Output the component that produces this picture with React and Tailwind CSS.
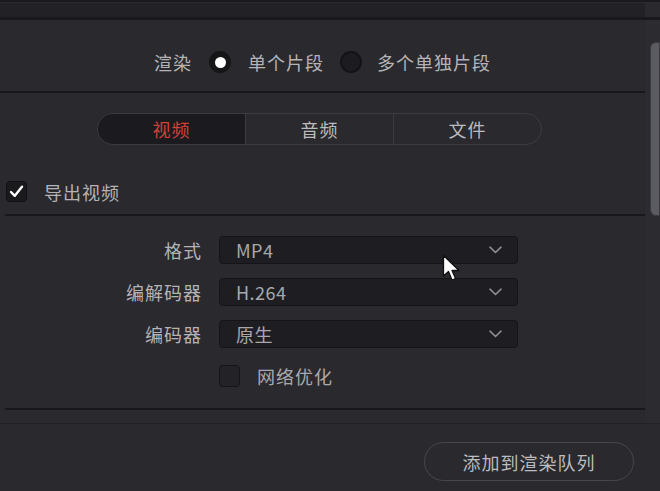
const font = { fontFamily: '"Noto Sans CJK SC", "Noto Sans", sans-serif' };

function Chevron() {
  return (
    <svg width="13" height="8" viewBox="0 0 13 8" className="shrink-0">
      <path d="M1 1.2 L6.5 6.5 L12 1.2" fill="none" stroke="#8e8e92" strokeWidth="1.6" strokeLinecap="round" strokeLinejoin="round" />
    </svg>
  );
}

function Select({ label, value }) {
  return (
    <div className="flex items-center h-[28px]">
      <div className="w-[202px] text-right text-[18px] tracking-[1px] leading-none text-[#b4b4b6]">{label}</div>
      <div className="ml-[17px] w-[299px] h-[28px] rounded-[4px] bg-[#1e1e22] border border-[#151518] flex items-center justify-between pl-[16px] pr-[15px]">
        <span className="text-[18px] tracking-[0.5px] leading-none text-[#a8a8ac]">{value}</span>
        <Chevron />
      </div>
    </div>
  );
}

export default function App() {
  const tabs = ['视频', '音频', '文件'];

  return (
    <div className="relative w-[660px] h-[491px] bg-[#29292e] overflow-hidden flex flex-col select-none" style={font}>
      {/* top strip */}
      <div className="h-[2px] bg-[#1a1a1d]" />
      <div className="h-[1px] bg-[#2a2a2f]" />
      <div className="h-[14px] bg-[#222226] w-[645px]" />
      <div className="h-[3px] bg-[#19191c]" />

      <div className="flex flex-1">
        <div className="w-[645px] flex flex-col">
          {/* render mode */}
          <div className="h-[71px] flex justify-center items-start pt-[31px]">
            <div className="flex items-center h-[22px] text-[18px] tracking-[1px] leading-none text-[#b4b4b6]">
              <span>渲染</span>
              <span className="ml-[17px] w-[22px] h-[22px] rounded-full bg-[#151517] flex items-center justify-center">
                <span className="w-[11px] h-[11px] rounded-full bg-white" />
              </span>
              <span className="ml-[17px]">单个片段</span>
              <span className="ml-[16px] w-[22px] h-[22px] rounded-full bg-[#1c1c20] border-2 border-[#141416]" />
              <span className="ml-[15px]">多个单独片段</span>
            </div>
          </div>
          <div className="h-[2px] bg-[#18181b]" />

          {/* tabs */}
          <div className="pt-[20px] pl-[97px]">
            <div className="w-[445px] h-[32px] rounded-full border border-[#3b3b41] flex overflow-hidden">
              {tabs.map((t, i) => (
                <div
                  key={t}
                  className={
                    'flex-1 flex items-center justify-center text-[18px] tracking-[1px] leading-none ' +
                    (i === 0 ? 'bg-[#1b1b1f] text-[#d2403a]' : 'text-[#bcbcbe]') +
                    (i > 0 ? ' border-l border-[#3b3b41]' : '')
                  }
                >
                  {t}
                </div>
              ))}
            </div>
          </div>

          {/* export video */}
          <div className="mt-[36px] ml-[6px] flex items-center h-[21px]">
            <span className="w-[21px] h-[21px] rounded-[4px] bg-[#1a1a1d] border border-[#111113] flex items-center justify-center">
              <svg width="15" height="13" viewBox="0 0 15 13">
                <path d="M2 7 L5.8 10.8 L13 1.8" fill="none" stroke="#ffffff" strokeWidth="2.4" strokeLinecap="round" strokeLinejoin="round" />
              </svg>
            </span>
            <span className="ml-[17px] text-[18px] tracking-[1px] leading-none text-[#b4b4b6]">导出视频</span>
          </div>
          <div className="mt-[12px] ml-[5px] h-[2px] bg-[#18181b]" />

          {/* format rows */}
          <div className="mt-[20px] flex flex-col gap-[14px]">
            <Select label="格式" value="MP4" />
            <Select label="编解码器" value="H.264" />
            <Select label="编码器" value="原生" />
          </div>

          <div className="mt-[17px] ml-[219px] flex items-center h-[22px]">
            <span className="w-[21px] h-[22px] rounded-[4px] bg-[#232327] border border-[#151518]" />
            <span className="ml-[17px] text-[18px] tracking-[1px] leading-none text-[#a9a9ac]">网络优化</span>
          </div>

          <div className="mt-[21px] ml-[5px] h-[2px] bg-[#18181b]" />
        </div>

        {/* scrollbar */}
        <div className="flex-1 bg-[#2b2b30]">
          <div className="mt-[22px] ml-[5px] h-[174px] rounded-l-[6px] bg-[#5b5b62] border border-[#3a3a40]" />
        </div>
      </div>

      {/* bottom bar */}
      <div className="h-[68px] shrink-0 border-t border-[#222226] bg-[#29292e] flex justify-end pr-[26px] pt-[18px]">
        <button className="w-[210px] h-[39px] rounded-full border border-[#46464d] text-[18px] tracking-[1px] leading-none text-[#bcbcbe] flex items-center justify-center">
          添加到渲染队列
        </button>
      </div>

      {/* mouse cursor */}
      <svg className="absolute left-[442px] top-[254px]" width="20" height="30" viewBox="0 0 20 30">
        <path d="M1.5 1.5 L1.5 22 L6.5 17.5 L10 26 L13.5 24.5 L10 16.5 L17 16.5 Z" fill="#ffffff" stroke="#111111" strokeWidth="1.3" strokeLinejoin="round" />
      </svg>
    </div>
  );
}
